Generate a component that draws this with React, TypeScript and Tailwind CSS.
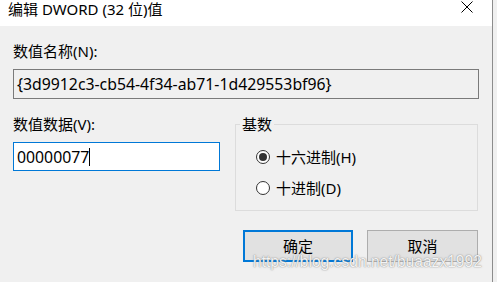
import React from 'react';

const FONT = { fontFamily: '"Noto Sans", "Noto Sans CJK SC", sans-serif' };

function Radio({ checked, label }: { checked?: boolean; label: string }) {
  return (
    <div className="flex items-center h-[20px] pl-[20px]">
      <span className="w-[14px] h-[14px] rounded-full border border-[#333] bg-white flex items-center justify-center">
        {checked && <span className="w-[8px] h-[8px] rounded-full bg-[#333]" />}
      </span>
      <span className="ml-[6px] text-[15px] leading-[20px] text-black">{label}</span>
    </div>
  );
}

export default function App() {
  return (
    <div className="w-[497px] h-[282px] bg-[#f0f0f0] overflow-hidden relative flex" style={FONT}>
      <div className="w-[493px] h-full border-r border-[#8c8c8c] flex flex-col">
        {/* Title bar */}
        <div className="h-[26px] bg-white flex items-start justify-between pl-[8px] pr-[19px]">
          <span className="text-[15px] leading-[18px] text-black">编辑 DWORD (32 位)值</span>
          <svg width="12" height="12" viewBox="0 0 12 12" className="mt-[1px]">
            <path d="M0.5 0.5 L11.5 11.5 M11.5 0.5 L0.5 11.5" stroke="#000" strokeWidth="1" fill="none" />
          </svg>
        </div>

        {/* Body */}
        <div className="flex-1 px-[13px] pt-[15px]">
          <div className="text-[15px] leading-[20px] text-black">数值名称(N):</div>
          <div className="mt-[8px] h-[30px] border border-[#7a7a7a] bg-[#f0f0f0] flex items-center px-[3px]">
            <span className="text-[15.8px] leading-[20px] text-black">{'{3d9912c3-cb54-4f34-ab71-1d429553bf96}'}</span>
          </div>

          <div className="mt-[15px] flex justify-between">
            <div className="w-[207px]">
              <div className="text-[15px] leading-[20px] text-black">数值数据(V):</div>
              <div className="mt-[8px] h-[29px] border border-[#0078d7] bg-white flex items-center px-[3px]">
                <span className="text-[15.8px] leading-[20px] text-black">00000077</span>
                <span className="w-px h-[18px] bg-black" />
              </div>
            </div>

            <fieldset className="w-[243px] border border-[#dcdcdc] pb-[12px] mr-[1px]">
              <legend className="ml-[4px] px-[2px] text-[15px] leading-[20px] text-black">基数</legend>
              <div className="mt-[13px] flex flex-col gap-[11px]">
                <Radio checked label="十六进制(H)" />
                <Radio label="十进制(D)" />
              </div>
            </fieldset>
          </div>

          <div className="mt-[19px] flex justify-end gap-[14px] pr-[1px]">
            <button className="w-[110px] h-[32px] bg-[#e1e1e1] border-2 border-[#0078d7] text-[15px] text-black">确定</button>
            <button className="w-[111px] h-[32px] bg-[#e1e1e1] border border-[#adadad] text-[15px] text-black">取消</button>
          </div>
        </div>
      </div>

      {/* Watermark */}
      <div
        className="absolute left-[253px] top-[253px] text-[15.6px] leading-[18px] text-white/90 pointer-events-none"
        style={{
          fontFamily: '"Liberation Sans", Arial, sans-serif',
          textShadow: '0 0 1px rgba(110,110,110,0.9), 0 0 2px rgba(140,140,140,0.5)',
        }}
      >
        https://blog.csdn.net/buaazx1992
      </div>
    </div>
  );
}
